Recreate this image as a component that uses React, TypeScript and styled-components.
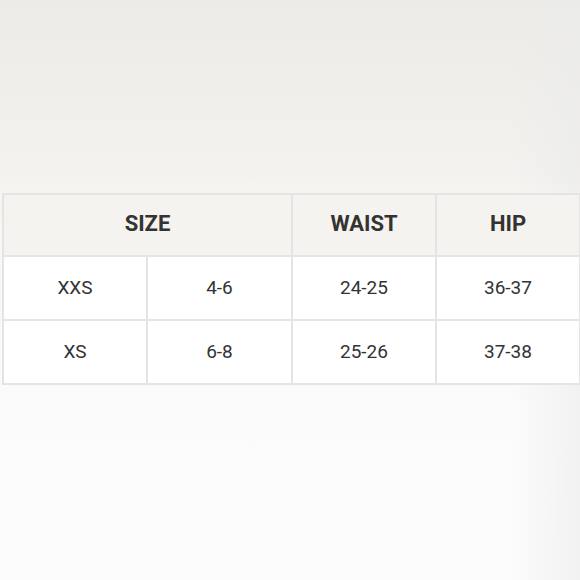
import React from "react";
import styled, { createGlobalStyle } from "styled-components";

const GlobalStyle = createGlobalStyle`
  html, body {
    margin: 0;
    padding: 0;
  }
  body {
    font-family: Roboto, "Liberation Sans", sans-serif;
  }
`;

const Page = styled.div`
  width: 580px;
  height: 580px;
  box-sizing: border-box;
  padding: 193px 1px 0 2px;
  background:
    linear-gradient(90deg, rgba(255, 255, 255, 0) 88%, rgba(235, 235, 235, 0.6) 100%),
    linear-gradient(180deg, #ecebe7 0%, #f3f2ef 30%, #f6f5f2 33%, #fbfbfb 70%, #fcfcfc 100%);
`;

const Table = styled.table`
  width: 100%;
  border-collapse: collapse;
  table-layout: fixed;
  background: #fff;
`;

const Col = styled.col<{ $w: number }>`
  width: ${(p) => p.$w}px;
`;

const HeadCell = styled.th`
  height: 57px;
  padding: 0 0 3px;
  background: #f4f3f0;
  border: 2px solid #e4e4e2;
  font-size: 22px;
  font-weight: 700;
  color: #333331;
  text-align: center;
`;

const Cell = styled.td`
  height: 60px;
  padding: 0 0 2px;
  border: 2px solid #e4e4e2;
  font-size: 19px;
  font-weight: 400;
  color: #333;
  text-align: center;
`;

const colWidths = [144, 145, 144, 144];

const rows = [
  { size: "XXS", us: "4-6", waist: "24-25", hip: "36-37" },
  { size: "XS", us: "6-8", waist: "25-26", hip: "37-38" },
];

export default function App() {
  return (
    <Page>
      <GlobalStyle />
      <Table>
        <colgroup>
          {colWidths.map((w, i) => (
            <Col key={i} $w={w} />
          ))}
        </colgroup>
        <thead>
          <tr>
            <HeadCell colSpan={2}>SIZE</HeadCell>
            <HeadCell>WAIST</HeadCell>
            <HeadCell>HIP</HeadCell>
          </tr>
        </thead>
        <tbody>
          {rows.map((r) => (
            <tr key={r.size}>
              <Cell>{r.size}</Cell>
              <Cell>{r.us}</Cell>
              <Cell>{r.waist}</Cell>
              <Cell>{r.hip}</Cell>
            </tr>
          ))}
        </tbody>
      </Table>
    </Page>
  );
}
